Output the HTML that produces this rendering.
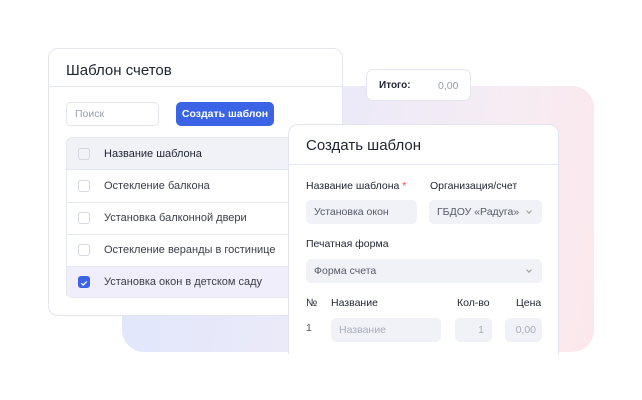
<!DOCTYPE html>
<html><head><meta charset="utf-8"><style>
*{box-sizing:border-box;margin:0;padding:0}
body{width:642px;height:400px;background:#fff;position:relative;overflow:hidden;font-family:"Liberation Sans",sans-serif;color:#1f2330}
.abs{position:absolute}
.blob{left:122px;top:86px;width:472px;height:266px;border-radius:22px;background:linear-gradient(100deg,#dfe6fc 0%,#eceaf8 45%,#f6ecf3 75%,#fce8ec 100%)}
.card{background:#fff;border:1px solid #e3e5f0;border-radius:10px}
.t{font-size:11px;white-space:nowrap}
.cb{width:12px;height:12px;border:1px solid #d6d8e2;border-radius:3px;background:#fff}
.inp{background:#f1f2f7;border-radius:5px;font-size:10.5px;color:#555a68;padding-left:8px;display:flex;align-items:center}
.chev{position:absolute;right:11px;top:9px;width:4px;height:4px;border-right:1px solid #999;border-bottom:1px solid #999;transform:rotate(45deg)}
</style></head><body>
<div class="abs blob"></div>

<div class="abs card" style="left:48px;top:48px;width:295px;height:268px;overflow:hidden">
  <div class="abs" style="left:0;top:0;width:100%;height:38px;border-bottom:1px solid #e6e8f1"></div>
  <div class="abs" style="left:17px;top:13px;font-size:15px;color:#1f2330">Шаблон счетов</div>
  <div class="abs" style="left:17px;top:53px;width:93px;height:24px;border:1px solid #e3e5ee;border-radius:5px;font-size:10.5px;color:#9aa0b0;padding:5px 0 0 8px">Поиск</div>
  <div class="abs" style="left:127px;top:53px;width:98px;height:24px;background:#3a63e6;border-radius:5px;color:#fff;font-size:10.5px;font-weight:bold;text-align:center;line-height:24px">Создать шаблон</div>
  <div class="abs" style="left:17px;top:88px;width:300px;height:161px;border:1px solid #e6e8f1;border-radius:6px;overflow:hidden">
    <div class="abs" style="left:0;top:0;width:100%;height:32px;background:#f1f2f8;border-bottom:1px solid #e6e8f1"></div>
    <div class="abs" style="left:0;top:128px;width:100%;height:33px;background:#f1eefb"></div>
    <div class="abs" style="left:0;top:64px;width:100%;border-top:1px solid #e6e8f1"></div>
    <div class="abs" style="left:0;top:96px;width:100%;border-top:1px solid #e6e8f1"></div>
    <div class="abs" style="left:0;top:128px;width:100%;border-top:1px solid #e6e8f1"></div>
    <div class="abs cb" style="left:11px;top:10px;background:#f1f2f8"></div>
    <div class="abs cb" style="left:11px;top:42px"></div>
    <div class="abs cb" style="left:11px;top:74px"></div>
    <div class="abs cb" style="left:11px;top:106px"></div>
    <div class="abs" style="left:11px;top:138px;width:12px;height:12px;border-radius:3px;background:#3a63e6"><svg width="12" height="12"><path d="M3.3 6.2l1.9 1.9 3.6-3.7" fill="none" stroke="#fff" stroke-width="1.3"/></svg></div>
    <div class="abs t" style="left:37px;top:10px">Название шаблона</div>
    <div class="abs t" style="left:37px;top:42px;color:#3a3d48">Остекление балкона</div>
    <div class="abs t" style="left:37px;top:74px;color:#3a3d48">Установка балконной двери</div>
    <div class="abs t" style="left:37px;top:106px;color:#3a3d48">Остекление веранды в гостинице</div>
    <div class="abs t" style="left:37px;top:138px;color:#3a3d48">Установка окон в детском саду</div>
  </div>
</div>

<div class="abs card" style="left:366px;top:69px;width:105px;height:32px;border-radius:7px">
  <div class="abs" style="left:12px;top:10px;font-size:10px;font-weight:bold">Итого:</div>
  <div class="abs" style="left:71px;top:10px;font-size:10.5px;color:#9aa0b0">0,00</div>
</div>

<div class="abs" style="left:288px;top:124px;width:271px;height:230px;background:#fff;border:1px solid #e3e5f0;border-bottom:none;border-radius:10px 10px 0 0">
  <div class="abs" style="left:0;top:0;width:100%;height:40px;border-bottom:1px solid #e6e8f1"></div>
  <div class="abs" style="left:17px;top:12px;font-size:15px">Создать шаблон</div>
  <div class="abs t" style="left:17px;top:55px;font-size:10.5px">Название шаблона <span style="color:#e5484d">*</span></div>
  <div class="abs t" style="left:141px;top:55px;font-size:10.5px">Организация/счет</div>
  <div class="abs inp" style="left:17px;top:75px;width:111px;height:24px">Установка окон</div>
  <div class="abs inp" style="left:140px;top:75px;width:113px;height:24px">ГБДОУ «Радуга»<span class="chev"></span></div>
  <div class="abs t" style="left:17px;top:113px;font-size:10.5px">Печатная форма</div>
  <div class="abs inp" style="left:17px;top:134px;width:236px;height:24px">Форма счета<span class="chev"></span></div>
  <div class="abs t" style="left:17px;top:172px;font-size:10.5px">№</div>
  <div class="abs t" style="left:42px;top:172px;font-size:10.5px">Название</div>
  <div class="abs t" style="left:168px;top:172px;font-size:10.5px">Кол-во</div>
  <div class="abs t" style="left:227px;top:172px;font-size:10.5px">Цена</div>
  <div class="abs t" style="left:17px;top:197px;font-size:10.5px;color:#555">1</div>
  <div class="abs inp" style="left:42px;top:193px;width:110px;height:24px;color:#a8adbb">Название</div>
  <div class="abs inp" style="left:166px;top:193px;width:37px;height:24px;color:#a8adbb;justify-content:flex-end;padding-right:8px">1</div>
  <div class="abs inp" style="left:216px;top:193px;width:37px;height:24px;color:#a8adbb;justify-content:flex-end;padding-right:6px">0,00</div>
</div>
</body></html>
